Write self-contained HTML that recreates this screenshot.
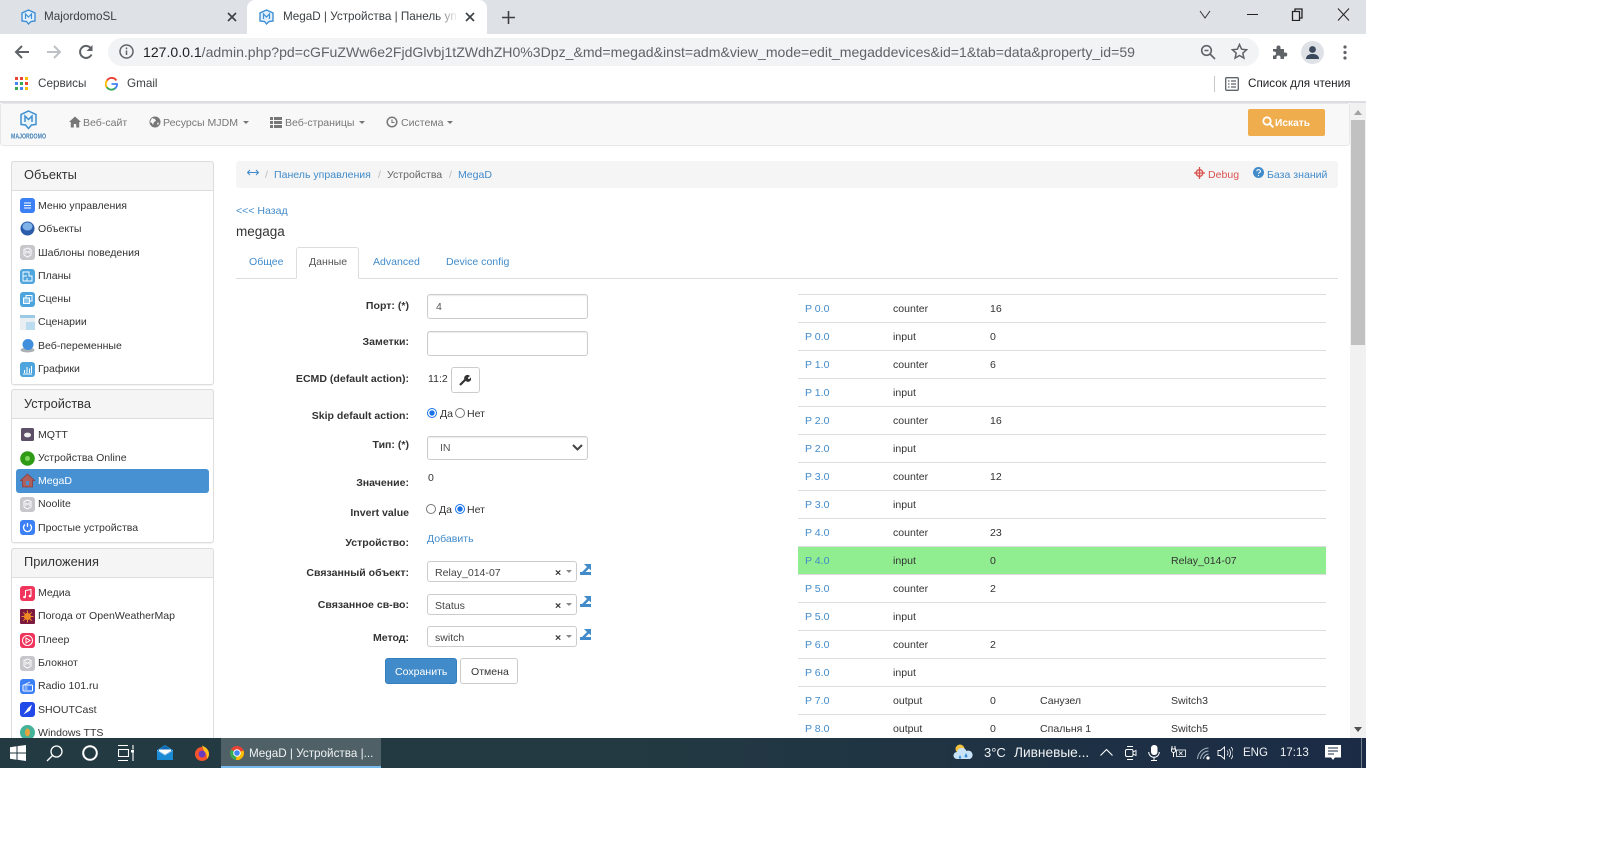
<!DOCTYPE html>
<html lang="ru"><head><meta charset="utf-8"><title>MegaD | Устройства | Панель управления</title>
<style>
*{box-sizing:border-box}
html,body{margin:0;padding:0;width:1620px;height:858px;overflow:hidden;background:#fff;font-family:"Liberation Sans",Arial,sans-serif;color:#333}
#v{position:absolute;left:0;top:0;width:1366px;height:768px;overflow:hidden;background:#fff}
#v div,#v span,#v svg{position:absolute}
.t{font-size:10.55px;line-height:16px;white-space:nowrap;color:#333;margin-top:1px}
.a{color:#428bca}
.n{color:#777}
.b{font-weight:bold;text-align:right;right:auto;width:200px;left:209px}
.c{font-size:11.7px;line-height:16px;white-space:nowrap}
.p{border:1px solid #ddd;border-radius:3px;background:#fff;left:11px;width:203px;box-shadow:0 1px 1px rgba(0,0,0,.05)}
.h{background:#f5f5f5;border:1px solid #ddd;border-bottom:1px solid #ddd;border-radius:3px 3px 0 0;left:11px;width:203px;height:30px}
.ht{font-size:12.8px;line-height:16px;color:#333;left:24px;white-space:nowrap}
.in{border:1px solid #ccc;border-radius:3px;background:#fff;box-shadow:inset 0 1px 1px rgba(0,0,0,.075);left:427px;width:161px}
.s2{border:1px solid #ccc;border-radius:3px;background:#fff;left:427px;width:150px;height:21px}
.r{left:798px;width:528px;height:28px;border-top:1px solid #ddd}
.r .t{top:5px}
.c1{left:7px;color:#428bca}.c2{left:95px}.c3{left:192px}.c4{left:242px}.c5{left:373px}
.tb{color:#f0f3f4;font-size:13px;line-height:16px;white-space:nowrap}
</style></head><body><div id="v">

<!-- tab strip -->
<div style="left:0;top:0;width:1366px;height:34px;background:#dee1e6"></div>
<div style="left:247px;top:0;width:240px;height:34px;background:#fff;border-radius:8px 8px 0 0"></div>
<svg style="left:21px;top:9px" width="15" height="17" viewBox="0 0 15 17"><path d="M7.500 1L14 4v8l-4 .5L7.500 15 5.500 12.500 1 12V4z" fill="#e3f0fb" stroke="#3f8fd6" stroke-width="1.400"/><path d="M4.500 10V5l3 3 3-3v5" fill="none" stroke="#3f8fd6" stroke-width="1.200"/></svg>
<span class="c" style="left:44px;top:9px;color:#3c4043">MajordomoSL</span>
<svg style="left:227px;top:12px" width="10" height="10" viewBox="0 0 10 10"><path d="M1 1l8 8M9 1l-8 8" stroke="#3c4043" stroke-width="1.600"/></svg>
<svg style="left:259px;top:9px" width="15" height="17" viewBox="0 0 15 17"><path d="M7.500 1L14 4v8l-4 .5L7.500 15 5.500 12.500 1 12V4z" fill="#e3f0fb" stroke="#3f8fd6" stroke-width="1.400"/><path d="M4.500 10V5l3 3 3-3v5" fill="none" stroke="#3f8fd6" stroke-width="1.200"/></svg>
<div style="left:283px;top:9px;width:175px;height:16px;overflow:hidden"><span class="c" style="left:0;top:0;color:#3c4043">MegaD | Устройства | Панель управления</span><div style="right:0;left:auto;top:0;width:22px;height:16px;background:linear-gradient(90deg,rgba(255,255,255,0),#fff)"></div></div>
<svg style="left:465px;top:12px" width="10" height="10" viewBox="0 0 10 10"><path d="M1 1l8 8M9 1l-8 8" stroke="#3c4043" stroke-width="1.600"/></svg>
<svg style="left:502px;top:11px" width="13" height="13" viewBox="0 0 13 13"><path d="M6.500 0v13M0 6.500h13" stroke="#3c4043" stroke-width="1.600"/></svg>
<svg style="left:1199px;top:10px" width="12" height="9" viewBox="0 0 12 9"><path d="M1 1l5 7 5-7" fill="none" stroke="#333" stroke-width="1"/></svg>
<div style="left:1247px;top:14px;width:11px;height:1.400px;background:#222"></div>
<svg style="left:1291px;top:8px" width="12" height="13" viewBox="0 0 12 13"><path d="M1.500 3.500h7v9h-7zM4 3.500V1h7v9H8.500" fill="none" stroke="#222" stroke-width="1.300"/></svg>
<svg style="left:1337px;top:8px" width="13" height="13" viewBox="0 0 13 13"><path d="M1 .5l11 12M12 .5L1 12.500" stroke="#222" stroke-width="1"/></svg>

<!-- toolbar -->
<svg style="left:14px;top:44px" width="16" height="16" viewBox="0 0 16 16"><path d="M15 8H2M8 2L2 8l6 6" fill="none" stroke="#5f6368" stroke-width="2"/></svg>
<svg style="left:46px;top:44px" width="16" height="16" viewBox="0 0 16 16"><path d="M1 8h13M8 2l6 6-6 6" fill="none" stroke="#bdc1c6" stroke-width="2"/></svg>
<svg style="left:78px;top:44px" width="16" height="16" viewBox="0 0 16 16"><path d="M13.500 10.500A6 6 0 1 1 13 4.500" fill="none" stroke="#5f6368" stroke-width="2"/><path d="M14.500 1v6h-6z" fill="#5f6368"/></svg>
<div style="left:108px;top:38px;width:1151px;height:28px;background:#f1f3f4;border-radius:14px"></div>
<svg style="left:119px;top:44px" width="15" height="15" viewBox="0 0 15 15"><circle cx="7.500" cy="7.500" r="6.500" fill="none" stroke="#5f6368" stroke-width="1.500"/><path d="M7.500 6.500v4.500M7.500 3.500v1.700" stroke="#5f6368" stroke-width="1.500"/></svg>
<svg style="left:143px;top:42px" width="1000" height="20" viewBox="0 0 1000 20"><text x="0" y="15" font-family="Liberation Sans,sans-serif" font-size="14" fill="#5f6368" textLength="992" lengthAdjust="spacingAndGlyphs"><tspan fill="#202124">127.0.0.1</tspan>/admin.php?pd=cGFuZWw6e2FjdGlvbj1tZWdhZH0%3Dpz_&amp;md=megad&amp;inst=adm&amp;view_mode=edit_megaddevices&amp;id=1&amp;tab=data&amp;property_id=59</text></svg>
<svg style="left:1200px;top:44px" width="16" height="16" viewBox="0 0 16 16"><circle cx="6.500" cy="6.500" r="4.800" fill="none" stroke="#5f6368" stroke-width="1.600"/><path d="M10 10l5 5M4.500 6.500h4" stroke="#5f6368" stroke-width="1.600"/></svg>
<svg style="left:1231px;top:43px" width="17" height="17" viewBox="0 0 17 17"><path d="M8.500 1.500l2.100 4.700 5 .5-3.800 3.400 1.100 5-4.400-2.600-4.400 2.600 1.100-5L1.400 6.700l5-.5z" fill="none" stroke="#5f6368" stroke-width="1.500"/></svg>
<svg style="left:1272px;top:44px" width="16" height="16" viewBox="0 0 16 16"><path d="M1 5h3.500V3.500a2 2 0 0 1 4 0V5H12v3.500h1.300a2 2 0 0 1 0 4H12V15H8.500v-1.500a2 2 0 0 0-4 0V15H1v-3.500h1a2 2 0 0 0 0-4H1z" fill="#5f6368"/></svg>
<svg style="left:1301px;top:41px" width="23" height="23" viewBox="0 0 23 23"><circle cx="11.500" cy="11.500" r="11.500" fill="#dee1e6"/><circle cx="11.500" cy="8.500" r="3.400" fill="#3c4a5e"/><path d="M5 17c1-3.500 4-4 6.500-4s5.500.5 6.500 4v1H5z" fill="#3c4a5e"/></svg>
<svg style="left:1343px;top:45px" width="4" height="15" viewBox="0 0 4 15"><circle cx="2" cy="2" r="1.600" fill="#5f6368"/><circle cx="2" cy="7.500" r="1.600" fill="#5f6368"/><circle cx="2" cy="13" r="1.600" fill="#5f6368"/></svg>

<!-- bookmarks -->
<svg style="left:15px;top:77px" width="14" height="13" viewBox="0 0 14 13"><g><rect x="0" y="0" width="3" height="3" fill="#ea4335"/><rect x="5" y="0" width="3" height="3" fill="#ea4335"/><rect x="10" y="0" width="3" height="3" fill="#fbbc04"/><rect x="0" y="5" width="3" height="3" fill="#4285f4"/><rect x="5" y="5" width="3" height="3" fill="#34a853"/><rect x="10" y="5" width="3" height="3" fill="#ea4335"/><rect x="0" y="10" width="3" height="3" fill="#34a853"/><rect x="5" y="10" width="3" height="3" fill="#4285f4"/><rect x="10" y="10" width="3" height="3" fill="#fbbc04"/></g></svg>
<span class="c" style="left:38px;top:76px;color:#3c4043">Сервисы</span>
<svg style="left:105px;top:77px" width="13" height="14" viewBox="0 0 14 14"><path d="M12.300 3.200A6 6 0 0 0 2 3.500" fill="none" stroke="#ea4335" stroke-width="2"/><path d="M2.300 3A6 6 0 0 0 2.300 11" fill="none" stroke="#fbbc04" stroke-width="2"/><path d="M2 10.500A6 6 0 0 0 11 11.500" fill="none" stroke="#34a853" stroke-width="2"/><path d="M7 7h6a6 6 0 0 1-2.500 5" fill="none" stroke="#4285f4" stroke-width="2"/></svg>
<span class="c" style="left:127px;top:76px;color:#3c4043">Gmail</span>
<div style="left:1214px;top:76px;width:1px;height:16px;background:#c6c8cc"></div>
<svg style="left:1225px;top:77px" width="14" height="14" viewBox="0 0 14 14"><rect x=".7" y=".7" width="12.600" height="12.600" rx="1" fill="none" stroke="#5f6368" stroke-width="1.300"/><path d="M3 4h1.500M6 4h5M3 7h1.500M6 7h5M3 10h1.500M6 10h5" stroke="#5f6368" stroke-width="1.300"/></svg>
<span class="c" style="left:1248px;top:76px;color:#202124">Список для чтения</span>
<div style="left:0;top:101px;width:1366px;height:2px;background:#dcdde0"></div>

<!-- navbar -->
<div style="left:0;top:103px;width:1350px;height:43px;background:#f8f8f8;border:1px solid #e7e7e7;border-radius:3px"></div>
<svg style="left:20px;top:110px" width="17" height="20" viewBox="0 0 17 20"><path d="M8.500 1L16 4.500v10l-4.500.5-3 3.500-3-3.500L1 14.500v-10z" fill="#eaf4fb" stroke="#3f90cf" stroke-width="1.500"/><path d="M5 12V6l3.500 3.500L12 6v6" fill="none" stroke="#3f90cf" stroke-width="1.500"/></svg>
<svg style="left:11px;top:131px" width="36" height="9" viewBox="0 0 36 9"><text x="0" y="7.500" font-family="Liberation Sans,sans-serif" font-weight="bold" font-size="7" fill="#3f7fb8" textLength="35" lengthAdjust="spacingAndGlyphs">MAJORDOMO</text></svg>
<svg style="left:69px;top:116px" width="12" height="12" viewBox="0 0 12 12"><path d="M6 .5L0 6h1.800v5.500h3V8h2.400v3.500h3V6H12z" fill="#777"/></svg>
<span class="t n" style="left:83px;top:114px">Веб-сайт</span>
<svg style="left:149px;top:116px" width="12" height="12" viewBox="0 0 12 12"><circle cx="6" cy="6" r="5.500" fill="#777"/><path d="M3 2l3 1 1 2-2 1-1 3-1-2-2-1zM8 7l2-.500-1 3z" fill="#f8f8f8"/></svg>
<span class="t n" style="left:163px;top:114px">Ресурсы MJDM</span>
<svg style="left:243px;top:121px" width="6" height="3"><path d="M0 0h6L3 3z" fill="#777"/></svg>
<svg style="left:270px;top:117px" width="12" height="11" viewBox="0 0 12 11"><path d="M0 0h3v3H0zM4 0h8v3H4zM0 4h3v3H0zM4 4h8v3H4zM0 8h3v3H0zM4 8h8v3H4z" fill="#777"/></svg>
<span class="t n" style="left:285px;top:114px">Веб-страницы</span>
<svg style="left:359px;top:121px" width="6" height="3"><path d="M0 0h6L3 3z" fill="#777"/></svg>
<svg style="left:386px;top:116px" width="12" height="12" viewBox="0 0 12 12"><circle cx="6" cy="6" r="4.800" fill="none" stroke="#777" stroke-width="1.500"/><path d="M6 3.500v3h2.500" fill="none" stroke="#777" stroke-width="1.100"/></svg>
<span class="t n" style="left:401px;top:114px">Система</span>
<svg style="left:447px;top:121px" width="6" height="3"><path d="M0 0h6L3 3z" fill="#777"/></svg>
<div style="left:1248px;top:109px;width:77px;height:27px;background:#f0ad4e;border-radius:2px"></div>
<svg style="left:1262px;top:116px" width="12" height="12" viewBox="0 0 12 12"><circle cx="5" cy="5" r="3.700" fill="none" stroke="#fff" stroke-width="1.800"/><path d="M7.800 7.800l3.500 3.500" stroke="#fff" stroke-width="2"/></svg>
<span class="t" style="left:1275px;top:115px;color:#fff;font-weight:bold;font-size:10.2px">Искать</span>

<!-- sidebar panel 1 -->
<div class="p" style="top:161px;height:224px"></div>
<div class="h" style="top:161px"></div>
<span class="ht" style="top:167px">Объекты</span>
<svg style="left:20px;top:198px" width="15" height="15"><rect width="15" height="15" rx="3" fill="#3c80f6"/><path d="M4 5h7M4 7.500h7M4 10h7" stroke="#fff" stroke-width="1.100"/></svg>
<span class="t" style="left:38px;top:197px">Меню управления</span>
<svg style="left:20px;top:221px" width="15" height="15"><circle cx="7.500" cy="7.500" r="7" fill="#2a5caa"/><ellipse cx="7.500" cy="5.500" rx="5" ry="4" fill="#7fb2e8"/></svg>
<span class="t" style="left:38px;top:220px">Объекты</span>
<svg style="left:20px;top:245px" width="15" height="15"><rect width="15" height="15" rx="3" fill="#c6c6cb"/><path d="M7.500 3l3.500 1.500v5.500l-3.500 2-3.500-2V4.500z" fill="none" stroke="#fff"/><path d="M5.800 9V6l1.700 1.500L9.200 6v3" fill="none" stroke="#fff" stroke-width=".8"/></svg>
<span class="t" style="left:38px;top:244px">Шаблоны поведения</span>
<svg style="left:20px;top:269px" width="15" height="15"><rect width="15" height="15" rx="3" fill="#4ea5de"/><path d="M3 3h6v4h3v5H3zM3 7h4M7 12V9" fill="none" stroke="#fff" stroke-width=".9"/></svg>
<span class="t" style="left:38px;top:267px">Планы</span>
<svg style="left:20px;top:292px" width="15" height="15"><rect width="15" height="15" rx="3" fill="#4ea5de"/><rect x="6" y="3.500" width="6" height="5.500" fill="none" stroke="#fff"/><rect x="3.500" y="6" width="6" height="5.500" fill="#8cc6ec" stroke="#fff"/></svg>
<span class="t" style="left:38px;top:290px">Сцены</span>
<svg style="left:20px;top:315px" width="15" height="15"><rect width="15" height="15" rx="1" fill="#e8eef2"/><rect y="0" width="15" height="3" fill="#9cc9e3"/><rect x="6" y="7" width="9" height="8" fill="#bcdcf0"/></svg>
<span class="t" style="left:38px;top:313px">Сценарии</span>
<svg style="left:20px;top:338px" width="15" height="15"><ellipse cx="7.500" cy="12" rx="7" ry="2.500" fill="#aab0b4"/><circle cx="8" cy="6.500" r="5.500" fill="#3f8fdc"/></svg>
<span class="t" style="left:38px;top:337px">Веб-переменные</span>
<svg style="left:20px;top:362px" width="15" height="15"><rect width="15" height="15" rx="3" fill="#4ea5de"/><path d="M3 12h9M4.500 11V8M7 11V5M9.500 11V6.500M11.500 11V4" stroke="#fff"/></svg>
<span class="t" style="left:38px;top:360px">Графики</span>

<!-- sidebar panel 2 -->
<div class="p" style="top:389px;height:154px"></div>
<div class="h" style="top:389px"></div>
<span class="ht" style="top:396px">Устройства</span>
<svg style="left:21px;top:428px" width="13" height="13"><rect width="13" height="13" rx="1.500" fill="#5d4f68"/><ellipse cx="6.500" cy="7" rx="3.500" ry="2.400" fill="#eee"/></svg>
<span class="t" style="left:38px;top:426px">MQTT</span>
<svg style="left:20px;top:451px" width="15" height="15"><circle cx="7.500" cy="7.500" r="7.300" fill="#2f9a15"/><circle cx="7.500" cy="7.500" r="2.500" fill="#7fd65e"/></svg>
<span class="t" style="left:38px;top:449px">Устройства Online</span>
<div style="left:16px;top:469px;width:193px;height:24px;background:#4791d2;border-radius:3px"></div>
<svg style="left:20px;top:473px" width="15" height="15"><path d="M7.500 1L.5 7.500h2V14h10V7.500h2z" fill="#b0605c" stroke="#8d3c3c" stroke-width=".8"/><rect x="6" y="8" width="3" height="4" fill="#4791d2"/></svg>
<span class="t" style="left:38px;top:472px;color:#fff">MegaD</span>
<svg style="left:20px;top:497px" width="15" height="15"><rect width="15" height="15" rx="3" fill="#c6c6cb"/><path d="M7.500 3l3.500 1.500v5.500l-3.500 2-3.500-2V4.500z" fill="none" stroke="#fff"/><path d="M5.800 9V6l1.700 1.500L9.200 6v3" fill="none" stroke="#fff" stroke-width=".8"/></svg>
<span class="t" style="left:38px;top:495px">Noolite</span>
<svg style="left:20px;top:520px" width="15" height="15"><rect width="15" height="15" rx="3" fill="#3c80f6"/><path d="M5 4.500a4 4 0 1 0 5 0M7.500 3v4" fill="none" stroke="#fff" stroke-width="1.300"/></svg>
<span class="t" style="left:38px;top:519px">Простые устройства</span>

<!-- sidebar panel 3 -->
<div class="p" style="top:548px;height:230px"></div>
<div class="h" style="top:548px"></div>
<span class="ht" style="top:554px">Приложения</span>
<svg style="left:20px;top:586px" width="15" height="15"><rect width="15" height="15" rx="3" fill="#f0345c"/><path d="M5.500 11V4.500l5.500-1v6.500" fill="none" stroke="#fff"/><circle cx="4.500" cy="11" r="1.300" fill="#fff"/><circle cx="10" cy="10" r="1.300" fill="#fff"/></svg>
<span class="t" style="left:38px;top:584px">Медиа</span>
<svg style="left:20px;top:609px" width="15" height="15"><rect width="15" height="15" rx="1" fill="#7c1b3f"/><circle cx="7.500" cy="7.500" r="3.500" fill="#f08a24"/><path d="M7.500 1.500v12M1.500 7.500h12M3.300 3.300l8.400 8.400M11.700 3.300l-8.400 8.400" stroke="#f08a24"/></svg>
<span class="t" style="left:38px;top:607px">Погода от OpenWeatherMap</span>
<svg style="left:20px;top:633px" width="15" height="15"><rect width="15" height="15" rx="3" fill="#f0345c"/><circle cx="7.500" cy="7.500" r="5" fill="none" stroke="#fff"/><path d="M6 5l4 2.500L6 10z" fill="none" stroke="#fff"/></svg>
<span class="t" style="left:38px;top:631px">Плеер</span>
<svg style="left:20px;top:656px" width="15" height="15"><rect width="15" height="15" rx="3" fill="#c6c6cb"/><path d="M7.500 3l3.500 1.500v5.500l-3.500 2-3.500-2V4.500z" fill="none" stroke="#fff"/><path d="M5.800 9V6l1.700 1.500L9.200 6v3" fill="none" stroke="#fff" stroke-width=".8"/></svg>
<span class="t" style="left:38px;top:654px">Блокнот</span>
<svg style="left:20px;top:679px" width="15" height="15"><rect width="15" height="15" rx="3" fill="#3c80f6"/><rect x="3" y="6" width="9.500" height="6" rx=".7" fill="none" stroke="#fff"/><path d="M4 6l6-3M4.500 8h3M4.500 10h3" stroke="#fff" stroke-width=".8"/></svg>
<span class="t" style="left:38px;top:677px">Radio 101.ru</span>
<svg style="left:20px;top:702px" width="15" height="15"><rect width="15" height="15" rx="3" fill="#2148e8"/><path d="M12 2.500L8 6 3.500 12.500 10 8.500z" fill="#fff"/></svg>
<span class="t" style="left:38px;top:701px">SHOUTCast</span>
<svg style="left:20px;top:725px" width="15" height="15"><circle cx="7.500" cy="7.500" r="7.500" fill="#44b39a"/><ellipse cx="7.500" cy="7.500" rx="2.500" ry="4" fill="#e8a33c"/></svg>
<span class="t" style="left:38px;top:724px">Windows TTS</span>

<!-- breadcrumb -->
<div style="left:236px;top:161px;width:1102px;height:27px;background:#f5f5f5;border-radius:3px"></div>
<svg style="left:247px;top:169px" width="12" height="7" viewBox="0 0 12 7"><path d="M1 3.500h10M3 1L.5 3.500 3 6M9 1l2.500 2.500L9 6" fill="none" stroke="#428bca" stroke-width="1.100"/></svg>
<span class="t" style="left:265px;top:166px;color:#bbb">/</span>
<span class="t a" style="left:274px;top:166px">Панель управления</span>
<span class="t" style="left:378px;top:166px;color:#bbb">/</span>
<span class="t" style="left:387px;top:166px;color:#666">Устройства</span>
<span class="t" style="left:449px;top:166px;color:#bbb">/</span>
<span class="t a" style="left:458px;top:166px">MegaD</span>
<svg style="left:1194px;top:167px" width="11" height="12" viewBox="0 0 11 12"><path d="M5.500 0v12M0 6h11" stroke="#d9534f" stroke-width="1.300"/><circle cx="5.500" cy="6" r="3.300" fill="none" stroke="#d9534f" stroke-width="1.400"/></svg>
<span class="t" style="left:1208px;top:166px;color:#d9534f">Debug</span>
<svg style="left:1253px;top:167px" width="11" height="11" viewBox="0 0 11 11"><circle cx="5.500" cy="5.500" r="5.500" fill="#428bca"/><path d="M3.800 4.200a1.800 1.600 0 1 1 2.500 1.500c-.6.300-.8.500-.8 1.100M5.500 8v1.100" fill="none" stroke="#fff"/></svg>
<span class="t a" style="left:1267px;top:166px">База знаний</span>

<span class="t a" style="left:236px;top:202px">&lt;&lt;&lt; Назад</span>
<span style="left:236px;top:224px;font-size:13.500px;line-height:16px;color:#333">megaga</span>

<!-- tabs -->
<div style="left:236px;top:278px;width:1102px;height:1px;background:#ddd"></div>
<div style="left:296px;top:247px;width:63px;height:32px;background:#fff;border:1px solid #ddd;border-bottom:1px solid #fff;border-radius:3px 3px 0 0"></div>
<span class="t a" style="left:249px;top:253px">Общее</span>
<span class="t" style="left:309px;top:253px;color:#555">Данные</span>
<span class="t a" style="left:373px;top:253px">Advanced</span>
<span class="t a" style="left:446px;top:253px">Device config</span>

<!-- form -->
<span class="t b" style="top:297px">Порт: (*)</span>
<div class="in" style="top:294px;height:25px"></div>
<span class="t" style="left:436px;top:298px;color:#555">4</span>
<span class="t b" style="top:333px">Заметки:</span>
<div class="in" style="top:331px;height:25px"></div>
<span class="t b" style="top:370px">ECMD (default action):</span>
<span class="t" style="left:428px;top:370px">11:2</span>
<div style="left:451px;top:367px;width:29px;height:26px;background:#fff;border:1px solid #ccc;border-radius:3px"></div>
<svg style="left:459px;top:374px" width="12" height="12" viewBox="0 0 12 12"><path d="M1 11l5.500-5.500" stroke="#333" stroke-width="2.200"/><path d="M6 6.500a3 3 0 0 1 5-4.500L8.800 3.800l.4 1 1.100.3 1.400-1.700A3 3 0 0 1 7 7z" fill="#333"/></svg>
<span class="t b" style="top:407px">Skip default action:</span>
<svg style="left:427px;top:408px" width="10" height="10"><circle cx="5" cy="5" r="4.500" fill="#fff" stroke="#1a73e8"/><circle cx="5" cy="5" r="2.700" fill="#1a73e8"/></svg>
<span class="t" style="left:440px;top:405px">Да</span>
<svg style="left:455px;top:408px" width="10" height="10"><circle cx="5" cy="5" r="4.500" fill="#fff" stroke="#767676"/></svg>
<span class="t" style="left:467px;top:405px">Нет</span>
<span class="t b" style="top:436px">Тип: (*)</span>
<div class="in" style="top:436px;height:24px"></div>
<span class="t" style="left:440px;top:439px;color:#555">IN</span>
<svg style="left:572px;top:444px" width="11" height="7" viewBox="0 0 11 7"><path d="M1 1l4.500 4.500L10 1" fill="none" stroke="#444" stroke-width="2"/></svg>
<span class="t b" style="top:474px">Значение:</span>
<span class="t" style="left:428px;top:469px">0</span>
<span class="t b" style="top:504px">Invert value</span>
<svg style="left:426px;top:504px" width="10" height="10"><circle cx="5" cy="5" r="4.500" fill="#fff" stroke="#767676"/></svg>
<span class="t" style="left:439px;top:501px">Да</span>
<svg style="left:455px;top:504px" width="10" height="10"><circle cx="5" cy="5" r="4.500" fill="#fff" stroke="#1a73e8"/><circle cx="5" cy="5" r="2.700" fill="#1a73e8"/></svg>
<span class="t" style="left:467px;top:501px">Нет</span>
<span class="t b" style="top:534px">Устройство:</span>
<span class="t a" style="left:427px;top:530px">Добавить</span>

<span class="t b" style="top:564px">Связанный объект:</span>
<div class="s2" style="top:561px"></div>
<span class="t" style="left:435px;top:564px;color:#444">Relay_014-07</span>
<span class="t" style="left:555px;top:564px;font-weight:bold;color:#333">×</span>
<svg style="left:566px;top:570px" width="6" height="3"><path d="M0 0h6L3 3z" fill="#888"/></svg>
<svg style="left:580px;top:564px" width="11" height="11" viewBox="0 0 11 11"><path d="M0 8h11v3H0z" fill="#428bca"/><path d="M4 0h7v6.500L9 4.500 5.500 8H2l5-5z" fill="#428bca"/></svg>

<span class="t b" style="top:596px">Связанное св-во:</span>
<div class="s2" style="top:594px"></div>
<span class="t" style="left:435px;top:597px;color:#444">Status</span>
<span class="t" style="left:555px;top:597px;font-weight:bold;color:#333">×</span>
<svg style="left:566px;top:603px" width="6" height="3"><path d="M0 0h6L3 3z" fill="#888"/></svg>
<svg style="left:580px;top:596px" width="11" height="11" viewBox="0 0 11 11"><path d="M0 8h11v3H0z" fill="#428bca"/><path d="M4 0h7v6.500L9 4.500 5.500 8H2l5-5z" fill="#428bca"/></svg>

<span class="t b" style="top:629px">Метод:</span>
<div class="s2" style="top:626px"></div>
<span class="t" style="left:435px;top:629px;color:#444">switch</span>
<span class="t" style="left:555px;top:629px;font-weight:bold;color:#333">×</span>
<svg style="left:566px;top:635px" width="6" height="3"><path d="M0 0h6L3 3z" fill="#888"/></svg>
<svg style="left:580px;top:629px" width="11" height="11" viewBox="0 0 11 11"><path d="M0 8h11v3H0z" fill="#428bca"/><path d="M4 0h7v6.500L9 4.500 5.500 8H2l5-5z" fill="#428bca"/></svg>

<div style="left:385px;top:658px;width:72px;height:26px;background:#428bca;border:1px solid #357ebd;border-radius:3px"></div>
<span class="t" style="left:395px;top:663px;color:#fff">Сохранить</span>
<div style="left:460px;top:658px;width:58px;height:26px;background:#fff;border:1px solid #ccc;border-radius:3px"></div>
<span class="t" style="left:471px;top:663px">Отмена</span>

<!-- table -->
<div class="r" style="top:294px"><span class="t c1">P 0.0</span><span class="t c2">counter</span><span class="t c3">16</span></div>
<div class="r" style="top:322px"><span class="t c1">P 0.0</span><span class="t c2">input</span><span class="t c3">0</span></div>
<div class="r" style="top:350px"><span class="t c1">P 1.0</span><span class="t c2">counter</span><span class="t c3">6</span></div>
<div class="r" style="top:378px"><span class="t c1">P 1.0</span><span class="t c2">input</span></div>
<div class="r" style="top:406px"><span class="t c1">P 2.0</span><span class="t c2">counter</span><span class="t c3">16</span></div>
<div class="r" style="top:434px"><span class="t c1">P 2.0</span><span class="t c2">input</span></div>
<div class="r" style="top:462px"><span class="t c1">P 3.0</span><span class="t c2">counter</span><span class="t c3">12</span></div>
<div class="r" style="top:490px"><span class="t c1">P 3.0</span><span class="t c2">input</span></div>
<div class="r" style="top:518px"><span class="t c1">P 4.0</span><span class="t c2">counter</span><span class="t c3">23</span></div>
<div class="r" style="top:546px;background:#90ee90"><span class="t c1">P 4.0</span><span class="t c2">input</span><span class="t c3">0</span><span class="t c5">Relay_014-07</span></div>
<div class="r" style="top:574px"><span class="t c1">P 5.0</span><span class="t c2">counter</span><span class="t c3">2</span></div>
<div class="r" style="top:602px"><span class="t c1">P 5.0</span><span class="t c2">input</span></div>
<div class="r" style="top:630px"><span class="t c1">P 6.0</span><span class="t c2">counter</span><span class="t c3">2</span></div>
<div class="r" style="top:658px"><span class="t c1">P 6.0</span><span class="t c2">input</span></div>
<div class="r" style="top:686px"><span class="t c1">P 7.0</span><span class="t c2">output</span><span class="t c3">0</span><span class="t c4">Санузел</span><span class="t c5">Switch3</span></div>
<div class="r" style="top:714px"><span class="t c1">P 8.0</span><span class="t c2">output</span><span class="t c3">0</span><span class="t c4">Спальня 1</span><span class="t c5">Switch5</span></div>

<!-- scrollbar -->
<div style="left:1350px;top:103px;width:16px;height:635px;background:#f1f1f1"></div>
<div style="left:1351px;top:120px;width:14px;height:225px;background:#c1c1c1"></div>
<svg style="left:1354px;top:110px" width="8" height="5"><path d="M0 5h8L4 0z" fill="#a3a3a3"/></svg>
<svg style="left:1354px;top:727px" width="8" height="5"><path d="M0 0h8L4 5z" fill="#505050"/></svg>

<!-- taskbar -->
<div style="left:0;top:738px;width:1366px;height:30px;background:linear-gradient(90deg,#233a42 0,#233a42 45%,#1b2b46 100%)"></div>
<div style="left:221px;top:738px;width:160px;height:30px;background:#4f6066"></div>
<div style="left:221px;top:766px;width:160px;height:2px;background:#76b9ed"></div>
<svg style="left:10px;top:745px" width="16" height="16" viewBox="0 0 16 16"><path d="M0 2.300l6.500-1v6.200H0zM7.500 1.100L16 0v7.500H7.500zM0 8.500h6.500v6.200l-6.500-1zM7.500 8.500H16V16l-8.500-1.200z" fill="#fff"/></svg>
<svg style="left:46px;top:745px" width="17" height="17" viewBox="0 0 17 17"><circle cx="10.500" cy="6.500" r="5.500" fill="none" stroke="#fff" stroke-width="1.300"/><path d="M6.500 10.500L1 16" stroke="#fff" stroke-width="1.300"/></svg>
<svg style="left:82px;top:745px" width="16" height="16"><circle cx="8" cy="8" r="6.800" fill="none" stroke="#fff" stroke-width="2"/></svg>
<svg style="left:118px;top:745px" width="16" height="16" viewBox="0 0 16 16"><path d="M0 .5h10M0 15.500h10M.5 4.500h10v7H.5zM15 0v4.500M15 7.500V16" fill="none" stroke="#fff" stroke-width="1.100"/><rect x="13" y="5" width="3" height="2.500" fill="#fff"/></svg>
<svg style="left:157px;top:745px" width="16" height="16" viewBox="0 0 16 16"><path d="M0 5l8-5 8 5v10H0z" fill="#1a8ad4"/><path d="M0 5l8 5 8-5v.5L8 10.500 0 5.500z" fill="#d8eefb"/><path d="M1 5.500L8 1l7 4.500-7 4.500z" fill="#0f67b0"/><path d="M2 4.500h12V6L8 9.800 2 6z" fill="#fff"/></svg>
<svg style="left:194px;top:745px" width="16" height="16" viewBox="0 0 16 16"><circle cx="8" cy="9" r="7" fill="#f5542d"/><path d="M8 .5c3.500 1.500 7 4 7 8.500 0 2-1 4-2 5 0-4-1-6-3-8z" fill="#ffc01f"/><circle cx="8" cy="9" r="3.500" fill="#6a3bc0"/></svg>
<svg style="left:230px;top:746px" width="14" height="14" viewBox="0 0 14 14"><circle cx="7" cy="7" r="7" fill="#ea4335"/><path d="M7 7L1 3.500A7 7 0 0 0 6 14z" fill="#34a853"/><path d="M7 7l6.500-2.500A7 7 0 0 1 6 14z" fill="#fbbc04"/><circle cx="7" cy="7" r="3.300" fill="#4285f4" stroke="#fff" stroke-width="1"/></svg>
<span class="tb" style="left:249px;top:746px;font-size:11.700px">MegaD | Устройства |...</span>

<svg style="left:953px;top:744px" width="21" height="17" viewBox="0 0 21 17"><circle cx="7" cy="5" r="4.500" fill="#f4c33d"/><path d="M4 15a3.500 3.500 0 0 1 0-7 5 5 0 0 1 9.500-1 4 4 0 0 1 3.500 8z" fill="#c8e2f7"/><path d="M13 9l1.500 3a1.500 1.500 0 1 1-3 0zM7 11l1.200 2.500a1.200 1.200 0 1 1-2.400 0z" fill="#3c8ed8"/></svg>
<span class="tb" style="left:984px;top:745px">3°C</span>
<span class="tb" style="left:1014px;top:745px;font-size:13.700px">Ливневые...</span>
<svg style="left:1100px;top:748px" width="13" height="8" viewBox="0 0 13 8"><path d="M.5 7.500L6.500 1.500l6 6" fill="none" stroke="#fff" stroke-width="1.100"/></svg>
<svg style="left:1125px;top:745px" width="12" height="16" viewBox="0 0 12 16"><rect x=".5" y="4.500" width="7.500" height="7" rx="1.500" fill="none" stroke="#fff"/><path d="M8 7l3-1.500v5L8 9M2 1.500h6M2 14.500h6" fill="none" stroke="#fff" stroke-width=".9"/></svg>
<svg style="left:1148px;top:745px" width="12" height="16" viewBox="0 0 12 16"><rect x="3" y="0" width="6.500" height="10" rx="3" fill="#fff"/><path d="M.7 7a5.300 5.300 0 0 0 10.600 0M6 12.500V15M3 15.500h6" fill="none" stroke="#fff"/></svg>
<svg style="left:1170px;top:746px" width="16" height="13" viewBox="0 0 16 13"><path d="M1 3h5M2 0v3M5 0v3M3.500 6v5" stroke="#fff" fill="none"/><path d="M1.500 3v1.500a2 2 0 0 0 4 0V3" fill="none" stroke="#fff"/><rect x="6.500" y="4" width="9" height="6.500" fill="none" stroke="#fff" stroke-width=".8"/><path d="M9 5.500l3.500 3.500M12.500 5.500L9 9" stroke="#fff" stroke-width=".8"/></svg>
<svg style="left:1197px;top:746px" width="13" height="14" viewBox="0 0 13 14"><path d="M.5 13a11.500 11.500 0 0 1 11-11M3.500 13a8.500 8.500 0 0 1 8-8M6.500 13a5.500 5.500 0 0 1 5-5" fill="none" stroke="#aab8c2"/><circle cx="11" cy="12" r="1.600" fill="#fff"/></svg>
<svg style="left:1217px;top:746px" width="16" height="14" viewBox="0 0 16 14"><path d="M1 4.500h2.500L7.500 1v12L3.500 9.500H1z" fill="none" stroke="#fff" stroke-width=".9"/><path d="M10 4.500a3.500 3.500 0 0 1 0 5M12 3a6 6 0 0 1 0 8M14 1a9 9 0 0 1 0 12" fill="none" stroke="#fff" stroke-width=".8"/></svg>
<span class="tb" style="left:1243px;top:745px;font-size:11.500px">ENG</span>
<span class="tb" style="left:1280px;top:745px;font-size:11.500px">17:13</span>
<svg style="left:1325px;top:745px" width="16" height="16" viewBox="0 0 16 16"><path d="M0 0h16v12.500h-6L8 15l-2-2.500H0z" fill="#fff"/><path d="M3 3h10M3 6h10M3 9h6" stroke="#1b2b46" stroke-width="1.100"/></svg>
<div style="left:1361px;top:738px;width:1px;height:30px;background:#72808e"></div>

</div></body></html>
